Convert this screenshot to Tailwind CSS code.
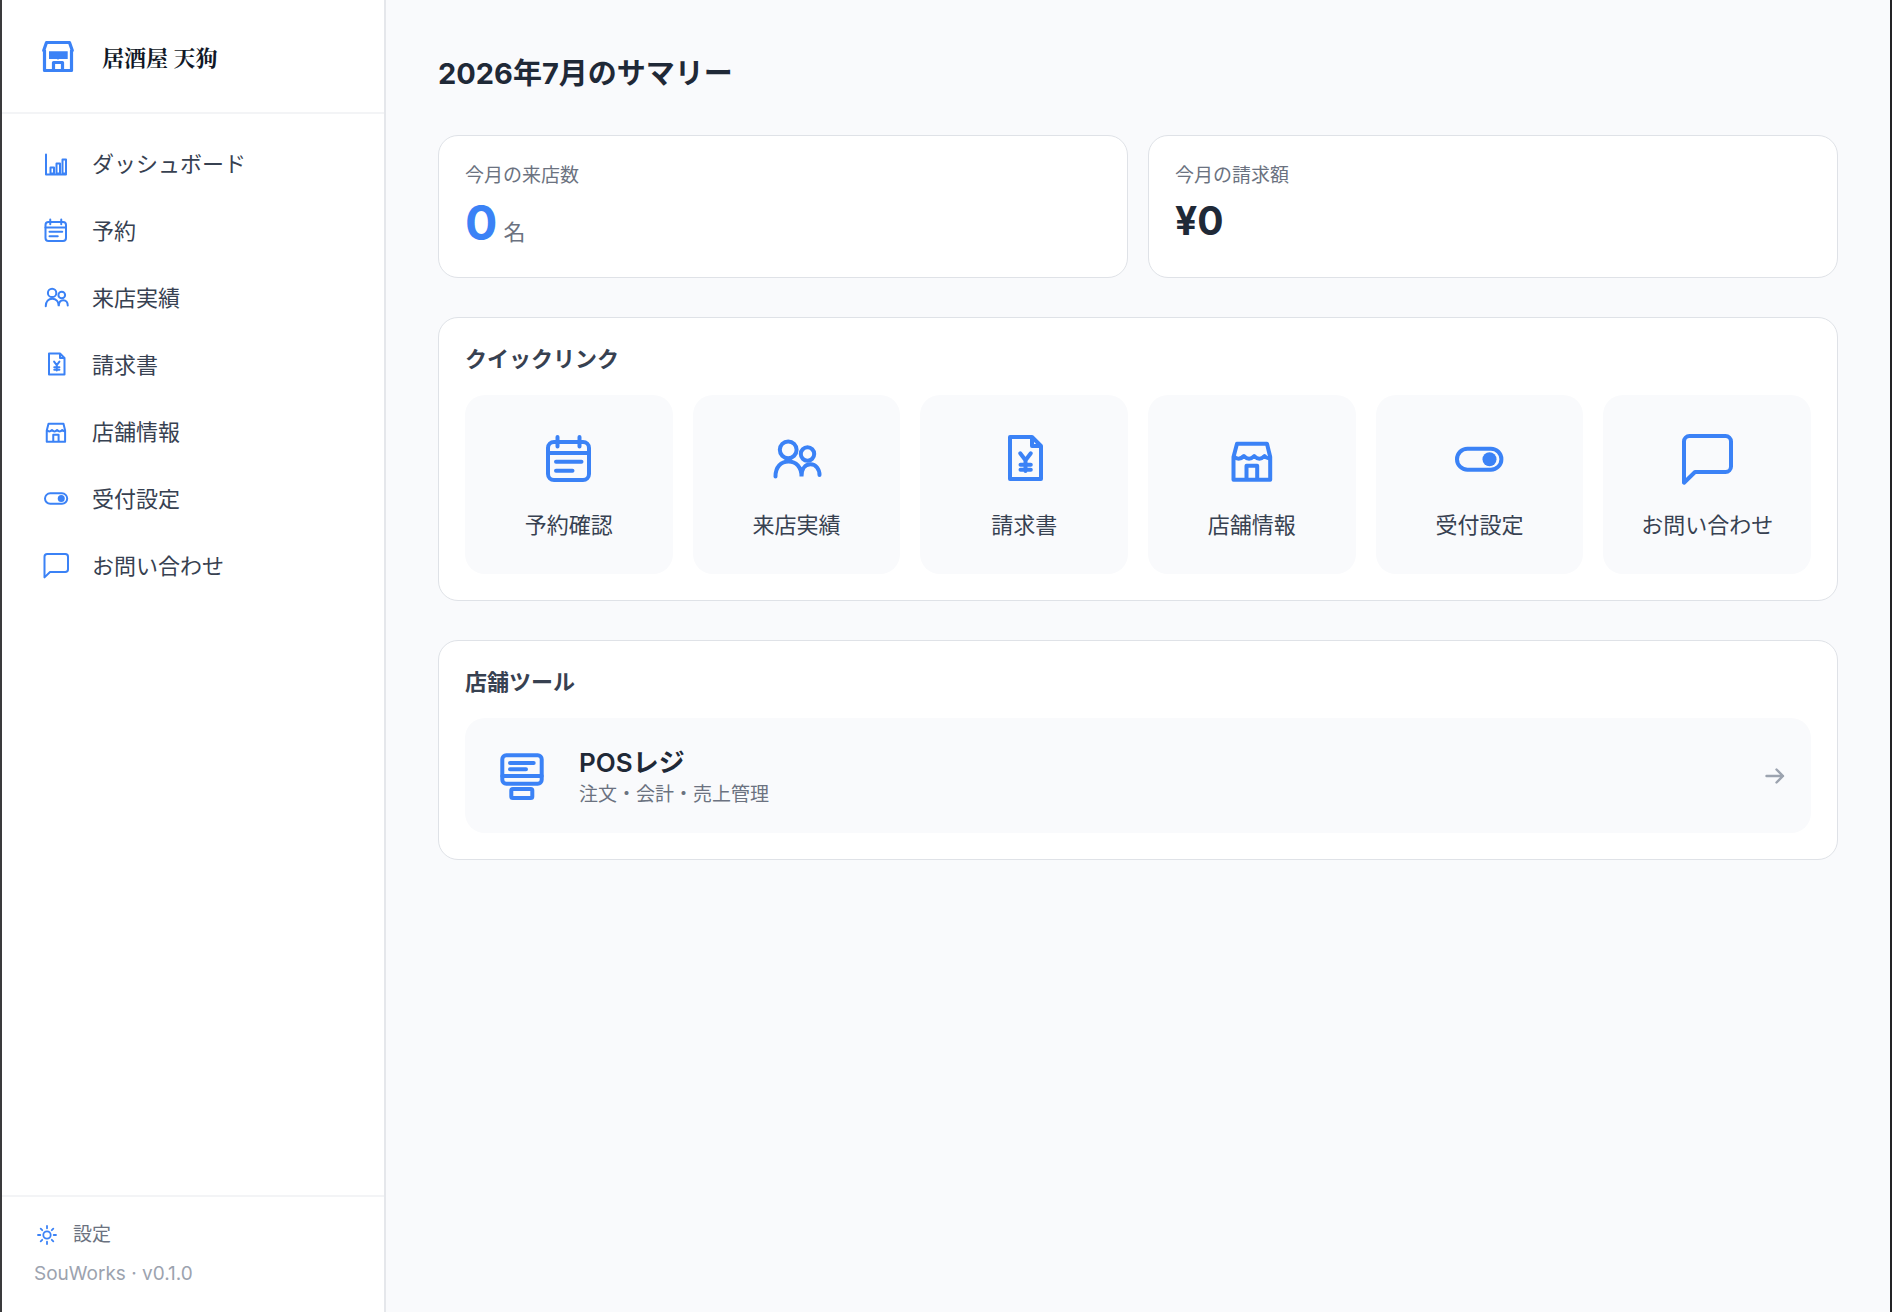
<!DOCTYPE html>
<html lang="ja">
<head>
<meta charset="utf-8">
<meta name="viewport" content="width=device-width, initial-scale=1">
<title>居酒屋 天狗</title>
<script src="https://cdn.jsdelivr.net/npm/@tailwindcss/browser@4"></script>
</head>
<body class="flex min-h-screen border-x-2 border-l-[#3a3a3c] border-r-[#232325] bg-[#f9fafc] font-['Inter','Noto_Sans_CJK_JP',sans-serif] text-[#1f2937]">

<!-- Shared icon set -->
<svg class="hidden" aria-hidden="true">
  <symbol id="i-chart" viewBox="0 0 64 64"><g fill="none" stroke="currentColor" stroke-width="4" stroke-linecap="round" stroke-linejoin="round"><path d="M12 13V53H52"/><rect x="21" y="39" width="7" height="12"/><rect x="33" y="31" width="7" height="20"/><rect x="45" y="23" width="7" height="28"/></g></symbol>
  <symbol id="i-calendar" viewBox="0 0 64 64"><g fill="none" stroke="currentColor" stroke-width="4" stroke-linecap="round"><rect x="11" y="14" width="41" height="38" rx="6"/><path d="M11 25H52M20.5 9V18.5M42.5 9V18.5M19 33.7H44.5M19 42.7H35.5"/></g></symbol>
  <symbol id="i-people" viewBox="0 0 64 64"><g fill="none" stroke="currentColor" stroke-width="4" stroke-linecap="round"><circle cx="24.2" cy="21.8" r="8.4"/><circle cx="43.5" cy="26" r="6.7"/><path d="M11.5 48.5C11.5 39 17 33.5 24.5 33.5S37.5 39 37.5 48.5C37.5 41 41 36.3 46.5 36.3S55.5 41 55.5 47"/></g></symbol>
  <symbol id="i-invoice" viewBox="0 0 64 64"><g fill="none" stroke="currentColor" stroke-width="4" stroke-linecap="round" stroke-linejoin="round"><path d="M18 9H40L49 18V51H18ZM40 9V18H49"/><path d="M28.2 25.3L33.5 32.3L38.8 25.3M33.5 32.3V43M28.5 36.7H38.8M28.5 41.7H38.8"/></g></symbol>
  <symbol id="i-shop" viewBox="0 0 64 64"><g fill="none" stroke="currentColor" stroke-width="4" stroke-linejoin="round"><path d="M17 15.7H47L50.2 29V51.7H13.5V29Z"/><path d="M13.5 28Q18.5 33.5 23.9 28Q29 33.5 34.2 28Q39.4 33.5 44.5 28Q47 31 50 30"/><path d="M26.5 51V37.7H37.2V51"/></g></symbol>
  <symbol id="i-toggle" viewBox="0 0 64 64"><rect x="10" y="20.7" width="44.4" height="21" rx="10.5" fill="none" stroke="currentColor" stroke-width="4"/><circle cx="42.5" cy="31.2" r="7" fill="currentColor"/></symbol>
  <symbol id="i-message" viewBox="0 0 64 64"><path fill="none" stroke="currentColor" stroke-width="4" stroke-linejoin="round" d="M56 38.500a5.500 5.500 0 0 1-5.500 5.500H20L9 54.700V13.500a5.500 5.500 0 0 1 5.500-5.500H50.500a5.500 5.500 0 0 1 5.500 5.500Z"/></symbol>
  <symbol id="i-pos" viewBox="0 0 64 64"><g fill="none" stroke="currentColor" stroke-width="4" stroke-linecap="round"><rect x="11.3" y="11.3" width="39.400" height="28.400" rx="4"/><path d="M11.300 32H50.700M19 19H42.700M19 25.300H35"/><rect x="20.300" y="45" width="21" height="9" rx="1.500"/></g></symbol>
</svg>

<aside class="flex w-96 shrink-0 flex-col border-r-2 border-[#e5e7eb] bg-white">
  <header class="flex h-[114px] items-center gap-6 border-b-2 border-[#f3f4f6] px-9">
    <svg class="size-10 text-[#3b82f6]" viewBox="0 -1 40 40" fill="none" stroke="currentColor" stroke-width="3.200" stroke-linejoin="round" aria-hidden="true"><path d="M8.500 5.500H31.500L34.300 13.500H33.500V33.500H6.500V13.500H5.700Z"/><path d="M11 14.300H29.700V22H21L20 22.800L19 22H11Z" fill="currentColor" stroke="none"/><path d="M15.500 33V25.500H24.500V33"/></svg>
    <h1 class="font-['Noto_Serif_CJK_JP','Noto_Sans_CJK_JP',serif] text-[22px] font-bold text-[#111827]">居酒屋 天狗</h1>
  </header>

  <nav class="flex-1 px-[38px] py-4">
    <ul class="text-[22px] leading-8 text-[#374151]">
      <li><a href="#" class="flex h-[67px] items-center gap-5"><svg class="size-8 text-[#3b82f6]"><use href="#i-chart"/></svg>ダッシュボード</a></li>
      <li><a href="#" class="flex h-[67px] items-center gap-5"><svg class="size-8 text-[#3b82f6]"><use href="#i-calendar"/></svg>予約</a></li>
      <li><a href="#" class="flex h-[67px] items-center gap-5"><svg class="size-8 text-[#3b82f6]"><use href="#i-people"/></svg>来店実績</a></li>
      <li><a href="#" class="flex h-[67px] items-center gap-5"><svg class="size-8 text-[#3b82f6]"><use href="#i-invoice"/></svg>請求書</a></li>
      <li><a href="#" class="flex h-[67px] items-center gap-5"><svg class="size-8 text-[#3b82f6]"><use href="#i-shop"/></svg>店舗情報</a></li>
      <li><a href="#" class="flex h-[67px] items-center gap-5"><svg class="size-8 text-[#3b82f6]"><use href="#i-toggle"/></svg>受付設定</a></li>
      <li><a href="#" class="flex h-[67px] items-center gap-5"><svg class="size-8 text-[#3b82f6]"><use href="#i-message"/></svg>お問い合わせ</a></li>
    </ul>
  </nav>

  <footer class="border-t-2 border-[#f3f4f6] px-8 pt-[22px] pb-6 text-[19px]">
    <a href="#" class="flex h-8 items-center gap-[13px] text-[#6b7280]">
      <svg class="size-[26px] text-[#3b82f6]" viewBox="0 0 26 26" fill="none" stroke="currentColor" stroke-width="1.800" stroke-linecap="round" aria-hidden="true"><circle cx="13" cy="13" r="3.700"/><path d="M13 4V6.300M13 19.700V22M4 13H6.300M19.700 13H22M6.700 6.700L8.200 8.200M17.800 17.800L19.300 19.300M6.700 19.300L8.200 17.800M17.800 8.200L19.300 6.700"/></svg>
      設定
    </a>
    <p class="mt-[9px] leading-7 text-[#9ca3af]">SouWorks · v0.1.0</p>
  </footer>
</aside>

<main class="min-w-0 flex-1 px-[52px] pt-[52px] pb-10">
  <h2 class="text-[29px] leading-[43px] font-bold">2026年7月のサマリー</h2>

  <div class="mt-10 grid grid-cols-2 gap-5">
    <section class="rounded-[20px] border border-[#dfe2e7] bg-white p-[26px]">
      <h3 class="text-[19px] leading-[27px] text-[#6b7280]">今月の来店数</h3>
      <p class="mt-1.5 text-[48px] leading-[56px] font-bold text-[#3b82f6]">0<span class="ml-1.5 text-[22px] leading-8 font-normal text-[#6b7280]">名</span></p>
    </section>
    <section class="rounded-[20px] border border-[#dfe2e7] bg-white p-[26px]">
      <h3 class="text-[19px] leading-[27px] text-[#6b7280]">今月の請求額</h3>
      <p class="mt-1.5 text-[39px] leading-[51px] font-bold">¥0</p>
    </section>
  </div>

  <section class="mt-[39px] rounded-[20px] border border-[#dfe2e7] bg-white p-[26px]">
    <h3 class="text-[22px] leading-[31px] font-bold text-[#374151]">クイックリンク</h3>
    <div class="mt-5 grid grid-cols-6 gap-5 text-[22px] leading-[31px] text-[#374151]">
      <a href="#" class="flex flex-col items-center gap-[18px] rounded-[20px] bg-[#f9fafc] py-[33px]"><svg class="size-16 text-[#3b82f6]"><use href="#i-calendar"/></svg>予約確認</a>
      <a href="#" class="flex flex-col items-center gap-[18px] rounded-[20px] bg-[#f9fafc] py-[33px]"><svg class="size-16 text-[#3b82f6]"><use href="#i-people"/></svg>来店実績</a>
      <a href="#" class="flex flex-col items-center gap-[18px] rounded-[20px] bg-[#f9fafc] py-[33px]"><svg class="size-16 text-[#3b82f6]"><use href="#i-invoice"/></svg>請求書</a>
      <a href="#" class="flex flex-col items-center gap-[18px] rounded-[20px] bg-[#f9fafc] py-[33px]"><svg class="size-16 text-[#3b82f6]"><use href="#i-shop"/></svg>店舗情報</a>
      <a href="#" class="flex flex-col items-center gap-[18px] rounded-[20px] bg-[#f9fafc] py-[33px]"><svg class="size-16 text-[#3b82f6]"><use href="#i-toggle"/></svg>受付設定</a>
      <a href="#" class="flex flex-col items-center gap-[18px] rounded-[20px] bg-[#f9fafc] py-[33px]"><svg class="size-16 text-[#3b82f6]"><use href="#i-message"/></svg>お問い合わせ</a>
    </div>
  </section>

  <section class="mt-[39px] rounded-[20px] border border-[#dfe2e7] bg-white p-[26px]">
    <h3 class="text-[22px] leading-[31px] font-bold text-[#374151]">店舗ツール</h3>
    <a href="#" class="mt-5 flex items-center gap-6 rounded-[20px] bg-[#f9fafc] px-[26px] pt-[26px] pb-[25px]">
      <svg class="size-16 text-[#3b82f6]"><use href="#i-pos"/></svg>
      <span class="flex-1">
        <span class="block text-[26px] leading-9 font-semibold">POSレジ</span>
        <span class="block text-[19px] leading-[27px] text-[#6b7280]">注文・会計・売上管理</span>
      </span>
      <svg class="size-5 text-[#9ca3af]" viewBox="0 0 20 20" fill="none" stroke="currentColor" stroke-width="2.400" stroke-linecap="round" stroke-linejoin="round" aria-hidden="true"><path d="M1.500 10H18M11.500 3.500L18 10L11.500 16.500"/></svg>
    </a>
  </section>
</main>
</body>
</html>
